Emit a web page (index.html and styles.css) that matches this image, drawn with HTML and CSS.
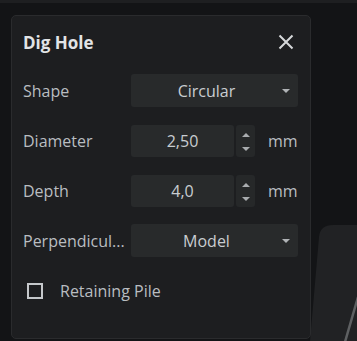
FILE: index.html
```html
<!DOCTYPE html>
<html lang="en">
<head>
    <meta charset="UTF-8">
    <title>Dig Hole</title>
    <link rel="stylesheet" href="styles.css">
</head>
<body>
    <div class="topbar"></div>
    <svg class="backdrop" width="60" height="130" viewBox="0 0 60 130">
        <path d="M22 26 Q23 14 36 14 L60 14 L60 130 L13 130 Z" fill="#212224"/>
        <path d="M61 86 L48 131" stroke="#5e6062" stroke-width="2.5" fill="none"/>
    </svg>
    <div class="panel">
        <div class="header">
            <span class="title">Dig Hole</span>
            <svg class="close" width="16" height="16" viewBox="0 0 16 16">
                <path d="M1.5 1.5 L14.5 14.5 M14.5 1.5 L1.5 14.5" stroke="#d6d8da" stroke-width="2" fill="none"/>
            </svg>
        </div>
        <div class="row">
            <span class="label">Shape</span>
            <div class="select"><span class="value">Circular</span><span class="caret"></span></div>
        </div>
        <div class="row">
            <span class="label">Diameter</span>
            <div class="number">
                <div class="field">2,50</div>
                <div class="spin"><span class="up"></span><span class="down"></span></div>
            </div>
            <span class="unit">mm</span>
        </div>
        <div class="row">
            <span class="label">Depth</span>
            <div class="number">
                <div class="field">4,0</div>
                <div class="spin"><span class="up"></span><span class="down"></span></div>
            </div>
            <span class="unit">mm</span>
        </div>
        <div class="row">
            <span class="label">Perpendicul...</span>
            <div class="select"><span class="value">Model</span><span class="caret"></span></div>
        </div>
        <label class="row check">
            <span class="box"></span>
            <span>Retaining Pile</span>
        </label>
    </div>
</body>
</html>
```

FILE: styles.css
```css
body {
    margin: 0;
    width: 357px;
    height: 341px;
    overflow: hidden;
    background: #131416;
    font-family: "Open Sans", "Noto Sans", sans-serif;
    font-size: 16px;
    color: #b9bdc1;
    position: relative;
}

.topbar {
    height: 3px;
    background: #1e1f21;
}

.backdrop {
    position: absolute;
    right: 0;
    bottom: 0;
}

.panel {
    position: relative;
    margin: 12px 0 0 11px;
    width: 300px;
    height: 324px;
    box-sizing: border-box;
    background: #1d1e20;
    border: 1px solid #2a2b2d;
    border-radius: 5px;
    padding: 0 12px 0 11px;
    display: flex;
    flex-direction: column;
    gap: 17px;
}

.header {
    display: flex;
    justify-content: space-between;
    align-items: center;
    height: 52px;
    margin-bottom: -11px;
    padding-right: 4px;
}

.title {
    font-weight: 700;
    font-size: 17px;
    color: #e2e4e6;
}

.row {
    display: flex;
    align-items: center;
    height: 33px;
}

.label {
    width: 108px;
    flex: none;
    white-space: nowrap;
}

.select {
    flex: 1;
    height: 33px;
    background: #282a2b;
    border-radius: 3px;
    display: flex;
    align-items: center;
    padding-right: 8px;
    color: #c9cdd1;
}

.select .value {
    flex: 1;
    text-align: center;
}

.caret {
    width: 0;
    height: 0;
    border-left: 4px solid transparent;
    border-right: 4px solid transparent;
    border-top: 4px solid #b0b3b6;
}

.number {
    display: flex;
    gap: 2px;
    height: 32px;
}

.field {
    width: 103px;
    background: #282a2b;
    border-radius: 3px;
    display: flex;
    align-items: center;
    justify-content: center;
    color: #c9cdd1;
}

.spin {
    width: 19px;
    background: #262829;
    border-radius: 3px;
    display: flex;
    flex-direction: column;
    align-items: center;
    justify-content: space-between;
    padding: 8px 0 6px;
    box-sizing: border-box;
}

.spin .up {
    border-left: 4px solid transparent;
    border-right: 4px solid transparent;
    border-bottom: 4px solid #a9acaf;
}

.spin .down {
    border-left: 4px solid transparent;
    border-right: 4px solid transparent;
    border-top: 4px solid #a9acaf;
}

.unit {
    margin-left: 13px;
}

.check {
    gap: 17px;
    padding-left: 4px;
}

.check .box {
    width: 12px;
    height: 12px;
    border: 2px solid #c5c8cb;
}
```
